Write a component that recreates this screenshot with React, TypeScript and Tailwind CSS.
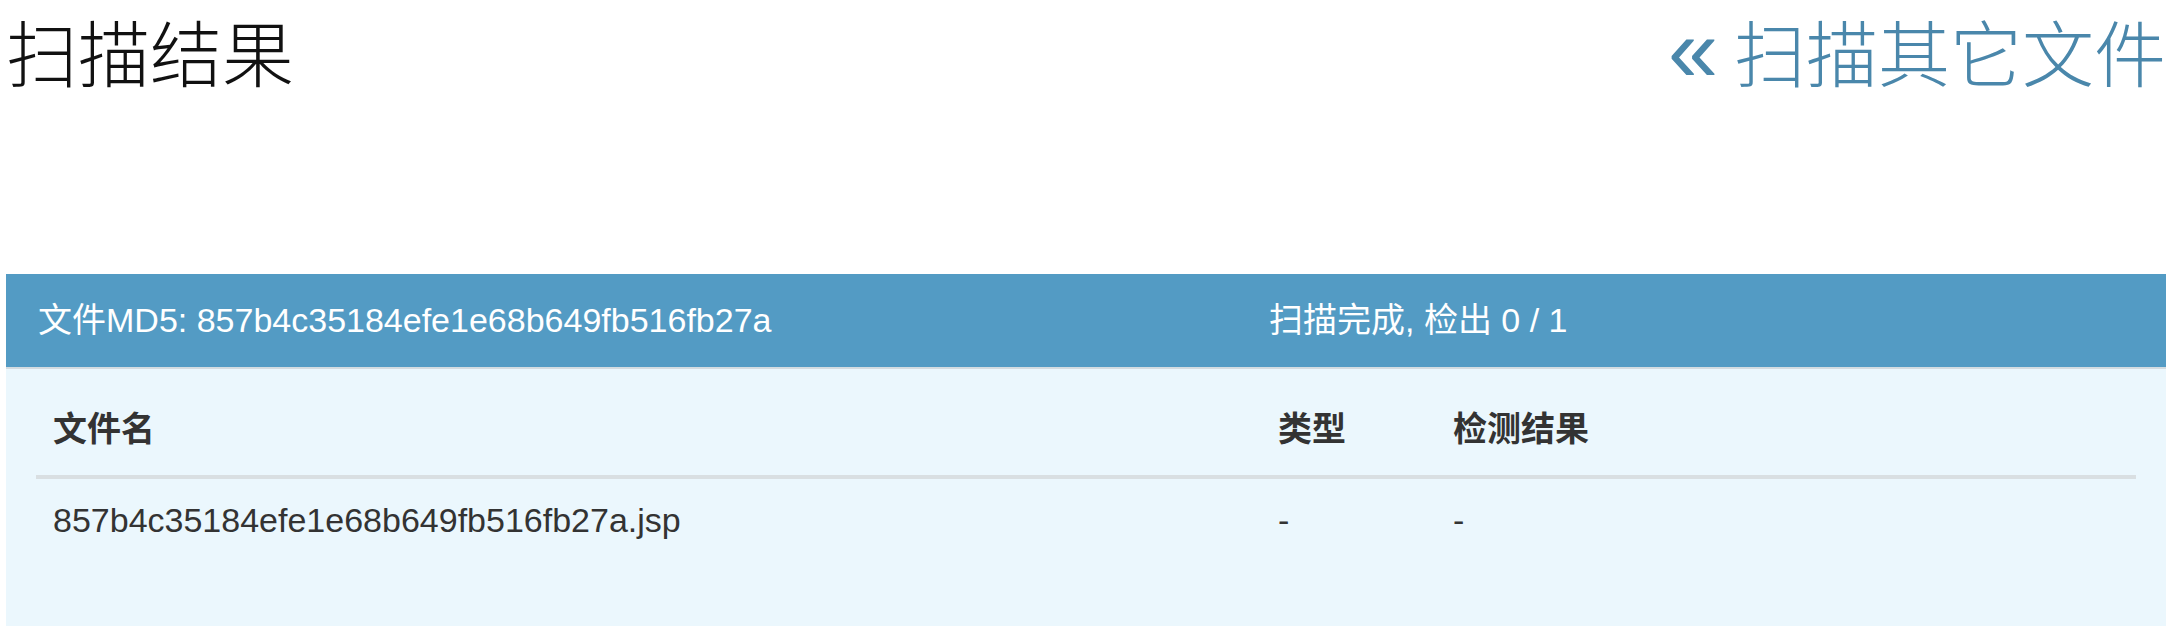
export default function App() {
  return (
    <div className="min-h-screen bg-white px-[6px] font-['Liberation_Sans','Noto_Sans_CJK_SC',sans-serif]">
      {/* 标题 */}
      <div className="flex items-start justify-between pt-[14px]">
        <h1 className="font-['Noto_Sans_CJK_SC',sans-serif] text-[72px] font-light leading-none text-[#111]">
          扫描结果
        </h1>
        <a
          href="#"
          className="font-['Noto_Sans_CJK_SC',sans-serif] text-[72px] font-light leading-none text-[#4a87ab]"
        >
          <span className="font-['Liberation_Sans',sans-serif] text-[90px] leading-[0]">«</span> 扫描其它文件
        </a>
      </div>

      {/* 结果面板 */}
      <div className="mt-[188px]">
        <div className="flex h-[93px] items-center bg-[#539bc4] px-[32px] text-[34px] text-white">
          <div className="w-[1231px]">文件MD5: 857b4c35184efe1e68b649fb516fb27a</div>
          <div>扫描完成, 检出 0 / 1</div>
        </div>
        <div className="border-t-2 border-[#d3dce1] bg-[#ebf7fd] px-[30px] pt-[14px] pb-[65px]">
          <table className="w-full border-collapse text-[34px] text-[#333]">
            <thead>
              <tr className="border-b-4 border-[#d9dfe2]">
                <th className="w-[1225px] px-[17px] py-[22px] text-left font-bold leading-[48px]">文件名</th>
                <th className="w-[175px] px-[17px] py-[22px] text-left font-bold leading-[48px]">类型</th>
                <th className="px-[17px] py-[22px] text-left font-bold leading-[48px]">检测结果</th>
              </tr>
            </thead>
            <tbody>
              <tr>
                <td className="px-[17px] py-[17px] leading-[48px]">857b4c35184efe1e68b649fb516fb27a.jsp</td>
                <td className="px-[17px] py-[17px] leading-[48px]">-</td>
                <td className="px-[17px] py-[17px] leading-[48px]">-</td>
              </tr>
            </tbody>
          </table>
        </div>
      </div>
    </div>
  );
}
